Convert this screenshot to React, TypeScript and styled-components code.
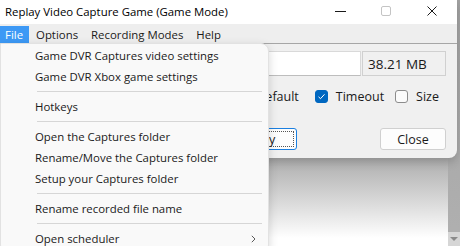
import styled, { createGlobalStyle } from "styled-components";

const GlobalStyle = createGlobalStyle`
  html, body {
    margin: 0;
    padding: 0;
    background: #ffffff;
  }
  * {
    box-sizing: border-box;
  }
`;

const FONT = `"Open Sans", "Noto Sans", "Liberation Sans", sans-serif`;

const menuBarItems = ["File", "Options", "Recording Modes", "Help"];

type PopupEntry =
  | { kind: "item"; label: string; submenu?: boolean }
  | { kind: "sep" };

const popupEntries: PopupEntry[] = [
  { kind: "item", label: "Game DVR Captures video settings" },
  { kind: "item", label: "Game DVR Xbox game settings" },
  { kind: "sep" },
  { kind: "item", label: "Hotkeys" },
  { kind: "sep" },
  { kind: "item", label: "Open the Captures folder" },
  { kind: "item", label: "Rename/Move the Captures folder" },
  { kind: "item", label: "Setup your Captures folder" },
  { kind: "sep" },
  { kind: "item", label: "Rename recorded file name" },
  { kind: "sep" },
  { kind: "item", label: "Open scheduler", submenu: true },
];

const App = () => {
  return (
    <Desktop>
      <GlobalStyle />
      <BackWindow>
        <BackFill />
        <ScrollTrack>
          <ScrollArrow />
        </ScrollTrack>
      </BackWindow>

      <Dialog>
        <TitleBar>
          <Title>Replay Video Capture Game (Game Mode)</Title>
          <Controls>
            <ControlButton>
              <svg width="11" height="10" viewBox="0 0 11 10">
                <path d="M0 5.5h11" stroke="#1a1a1a" strokeWidth="1" />
              </svg>
            </ControlButton>
            <ControlButton>
              <svg width="10" height="10" viewBox="0 0 10 10">
                <rect x="0.5" y="0.5" width="9" height="9" rx="1.5" fill="none" stroke="#c4c4c4" strokeWidth="1" />
              </svg>
            </ControlButton>
            <ControlButton>
              <svg width="10" height="10" viewBox="0 0 10 10">
                <path d="M0.5 0.5l9 9M9.5 0.5l-9 9" stroke="#1a1a1a" strokeWidth="1" />
              </svg>
            </ControlButton>
          </Controls>
        </TitleBar>

        <MenuBar>
          {menuBarItems.map((item, i) => (
            <MenuBarItem key={item} $active={i === 0}>
              {item}
            </MenuBarItem>
          ))}
        </MenuBar>

        <Client>
          <FieldRow>
            <TextInput />
            <SizeBox>38.21 MB</SizeBox>
          </FieldRow>
          <CheckRow>
            <CheckItem>
              <CheckBox $checked />
              <CheckLabel>Default</CheckLabel>
            </CheckItem>
            <CheckItem $space={16}>
              <CheckBox $checked>
                <svg width="9" height="9" viewBox="0 0 9 9">
                  <path d="M1.5 4.8l2 1.9 4-4.4" fill="none" stroke="#ffffff" strokeWidth="1" />
                </svg>
              </CheckBox>
              <CheckLabel>Timeout</CheckLabel>
            </CheckItem>
            <CheckItem $space={11}>
              <CheckBox />
              <CheckLabel>Size</CheckLabel>
            </CheckItem>
          </CheckRow>
          <ButtonRow>
            <PushButton $focused $width={76}>Apply</PushButton>
            <PushButton $width={66}>Close</PushButton>
          </ButtonRow>
        </Client>
      </Dialog>

      <Popup>
        {popupEntries.map((entry, i) =>
          entry.kind === "sep" ? (
            <Separator key={i} />
          ) : (
            <PopupItem key={i}>
              <span>{entry.label}</span>
              {entry.submenu && (
                <svg width="5" height="8" viewBox="0 0 5 8">
                  <path d="M0.8 0.8L4 4L0.8 7.2" fill="none" stroke="#5a5a5a" strokeWidth="1" />
                </svg>
              )}
            </PopupItem>
          )
        )}
      </Popup>
    </Desktop>
  );
};

const Desktop = styled.div`
  position: relative;
  width: 460px;
  height: 246px;
  overflow: hidden;
  font-family: ${FONT};
  font-size: 11.4px;
  color: #1a1a1a;
`;

const BackWindow = styled.div`
  display: flex;
  width: 100%;
  height: 100%;
`;

const BackFill = styled.div`
  flex: 1;
  background: linear-gradient(
    to bottom,
    #a9a9a9 0px,
    #aaaaaa 155px,
    #b4b4b4 165px,
    #dcdcdc 205px,
    #ffffff 238px
  );
`;

const ScrollTrack = styled.div`
  width: 12px;
  display: flex;
  flex-direction: column;
  justify-content: flex-end;
  background: linear-gradient(to bottom, #a2a2a2, #b0b0b0);
`;

const ScrollArrow = styled.div`
  height: 14px;
  display: flex;
  align-items: center;
  justify-content: center;
  background: #d6d6d6;
  &::after {
    content: "";
    border-left: 4px solid transparent;
    border-right: 4px solid transparent;
    border-top: 4px solid #8a8a8a;
  }
`;

const Dialog = styled.div`
  position: absolute;
  top: 0;
  left: 0;
  width: 457px;
  height: 158px;
  display: flex;
  flex-direction: column;
  background: #f0f0f0;
  border-radius: 0 0 8px 8px;
  box-shadow: 0 4px 10px rgba(0, 0, 0, 0.18);
  overflow: hidden;
`;

const TitleBar = styled.div`
  height: 24px;
  display: flex;
  align-items: center;
  justify-content: space-between;
  background: #ffffff;
  padding-left: 5px;
`;

const Title = styled.span`
  color: #000000;
  white-space: nowrap;
  margin-top: -1px;
`;

const Controls = styled.div`
  display: flex;
  height: 100%;
  padding-right: 2px;
`;

const ControlButton = styled.div`
  width: 46px;
  display: flex;
  align-items: center;
  justify-content: center;
  svg {
    display: block;
    margin-top: -2px;
  }
`;

const MenuBar = styled.div`
  height: 20px;
  display: flex;
  align-items: stretch;
  background: #eeeeee;
  padding-top: 2px;
  border-bottom: 1px solid #a6a6a6;
`;

const MenuBarItem = styled.div<{ $active?: boolean }>`
  display: flex;
  align-items: center;
  padding: 0 6px 0 5px;
  margin-right: 2px;
  white-space: nowrap;
  background: ${(p) => (p.$active ? "#3d99f5" : "transparent")};
  color: ${(p) => (p.$active ? "#ffffff" : "#1a1a1a")};
`;

const Client = styled.div`
  flex: 1;
  display: flex;
  flex-direction: column;
  padding: 7px 11px 0 11px;
  font-size: 12.5px;
`;

const FieldRow = styled.div`
  display: flex;
  height: 25px;
`;

const TextInput = styled.div`
  flex: 1;
  background: #ffffff;
  border: 1px solid #d9d9d9;
  border-bottom-color: #bdbdbd;
`;

const SizeBox = styled.div`
  width: 84px;
  display: flex;
  align-items: center;
  padding-left: 5px;
  background: #f0f0f0;
  border: 1px solid #d0d0d0;
  margin-left: 1px;
  font-size: 13.5px;
`;

const CheckRow = styled.div`
  display: flex;
  justify-content: flex-end;
  align-items: center;
  height: 16px;
  margin-top: 12px;
  padding-right: 7px;
`;

const CheckItem = styled.div<{ $space?: number }>`
  display: flex;
  align-items: center;
  margin-left: ${(p) => p.$space ?? 0}px;
`;

const CheckBox = styled.div<{ $checked?: boolean }>`
  width: 13px;
  height: 13px;
  border-radius: 3px;
  display: flex;
  align-items: center;
  justify-content: center;
  background: ${(p) => (p.$checked ? "#0067c0" : "#fbfbfb")};
  border: 1px solid ${(p) => (p.$checked ? "#0067c0" : "#8c8c8c")};
  margin-right: 8px;
`;

const CheckLabel = styled.span`
  white-space: nowrap;
`;

const ButtonRow = styled.div`
  display: flex;
  justify-content: flex-end;
  gap: 83px;
  margin-top: 24px;
`;

const PushButton = styled.div<{ $focused?: boolean; $width: number }>`
  position: relative;
  width: ${(p) => p.$width}px;
  height: 22px;
  display: flex;
  align-items: center;
  justify-content: center;
  background: #fdfdfd;
  border-radius: 3px;
  border: 1px solid ${(p) => (p.$focused ? "#1b7fe0" : "#d0d0d0")};
  ${(p) =>
    p.$focused &&
    `
    &::after {
      content: "";
      position: absolute;
      inset: 2px;
      border: 1px dotted #555555;
    }
  `}
`;

const Popup = styled.div`
  position: absolute;
  top: 43px;
  left: 0;
  width: 269px;
  height: 210px;
  padding-top: 1px;
  background: #f9f9f9;
  border: 1px solid #e2e2e2;
  border-radius: 0 8px 8px 8px;
  box-shadow: 0 3px 10px rgba(0, 0, 0, 0.16);
`;

const PopupItem = styled.div`
  height: 21px;
  display: flex;
  align-items: center;
  justify-content: space-between;
  padding: 0 12px 0 34px;
  white-space: nowrap;
  svg {
    display: block;
  }
`;

const Separator = styled.div`
  height: 9px;
  margin: 0 6px 0 36px;
  position: relative;
  &::after {
    content: "";
    position: absolute;
    left: 0;
    right: 0;
    top: 4px;
    height: 1px;
    background: #d6d6d6;
  }
`;

export default App;
